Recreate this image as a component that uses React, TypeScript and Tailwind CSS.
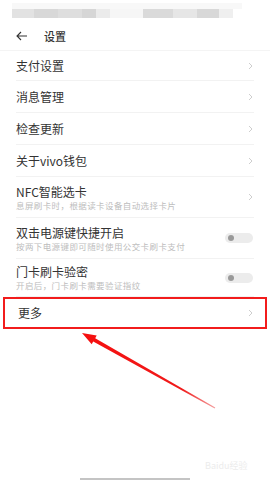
import React from 'react';

const font = { fontFamily: '"Noto Sans CJK SC", "Noto Sans", sans-serif' };

function Chevron() {
  return (
    <svg width="5" height="8" viewBox="0 0 5 8" className="shrink-0">
      <polyline points="1,1 4,4 1,7" fill="none" stroke="#c8c8c8" strokeWidth="0.9" />
    </svg>
  );
}

function Toggle() {
  return (
    <div className="w-[28px] h-[10px] rounded-full bg-[#ececec] flex items-center pl-[3px] shrink-0">
      <div className="w-[6px] h-[6px] rounded-full bg-[#9a9a9a]"></div>
    </div>
  );
}

type Row = { title: string; sub?: string; toggle?: boolean; h: string };

const ROWS: Row[] = [
  { title: '支付设置', h: 'h-[30px]' },
  { title: '消息管理', h: 'h-[32px]' },
  { title: '检查更新', h: 'h-[32px]' },
  { title: '关于vivo钱包', h: 'h-[32px]' },
  { title: 'NFC智能选卡', sub: '息屏刷卡时，根据读卡设备自动选择卡片', h: 'h-[41px]' },
  { title: '双击电源键快捷开启', sub: '按两下电源键即可随时使用公交卡刷卡支付', toggle: true, h: 'h-[41px]' },
  { title: '门卡刷卡验密', sub: '开启后，门卡刷卡需要验证指纹', toggle: true, h: 'h-[38px]' },
];

export default function App() {
  return (
    <div className="relative w-[270px] h-[480px] bg-white flex flex-col overflow-hidden" style={font}>
      {/* blurred status bar */}
      <div className="h-[22px] pt-[3px] px-[12px] flex flex-col">
        <div className="h-[6px] w-[230px] bg-[#f8f8f8]"></div>
        <div className="h-[9px] flex items-start">
          <div className="w-[22px] h-[9px] bg-[#e2e2e2]"></div>
          <div className="w-[24px] h-[9px] bg-[#d8d8d8]"></div>
          <div className="w-[24px] h-[9px] bg-[#dedede]"></div>
          <div className="w-[14px] h-[9px] bg-[#d6d6d6]"></div>
          <div className="w-[14px] h-[9px] bg-[#ebebeb]"></div>
          <div className="w-[33px] h-[9px] bg-[#f6f6f6]"></div>
          <div className="w-[30px] h-[9px] bg-[#dadada]"></div>
          <div className="w-[24px] h-[9px] bg-[#e6e6e6]"></div>
          <div className="w-[22px] h-[9px] bg-[#d8d8d8]"></div>
          <div className="w-[14px] h-[9px] bg-[#efefef]"></div>
        </div>
      </div>

      {/* header */}
      <div className="h-[29px] flex items-center px-[16px] border-b border-[#f4f4f4]">
        <svg width="12" height="10" viewBox="0 0 12 10" className="mr-[16px]">
          <path d="M5 1 L1 5 L5 9 M1 5 H11" fill="none" stroke="#333" strokeWidth="1.1" />
        </svg>
        <span className="text-[11px] text-[#333] font-medium">设置</span>
      </div>

      {/* list */}
      <div className="flex flex-col">
        {ROWS.map((r) => (
          <div key={r.title} className={`${r.h} mx-[16px] pr-[1px] flex items-center justify-between border-b border-[#f2f2f2]`}>
            <div className="flex flex-col">
              <span className="text-[12px] leading-[15px] text-[#333]">{r.title}</span>
              {r.sub && <span className="text-[8.5px] leading-[12px] tracking-[0.4px] text-[#bdbdbd]">{r.sub}</span>}
            </div>
            {r.toggle ? <Toggle /> : <Chevron />}
          </div>
        ))}
        <div className="h-[32px] mx-[3px] border-2 border-[#f21c1c] flex items-center justify-between pl-[13px] pr-[12px]">
          <span className="text-[12px] text-[#333]">更多</span>
          <Chevron />
        </div>
      </div>

      <div className="flex-1"></div>
      <div className="flex justify-center">
        <div className="w-[110px] h-[2px] bg-[#c4c4c4]"></div>
      </div>

      {/* annotation arrow */}
      <svg className="absolute left-0 top-0" width="270" height="480">
        <defs>
          <linearGradient id="ar" x1="82" y1="333" x2="215" y2="408" gradientUnits="userSpaceOnUse">
            <stop offset="0" stopColor="#f50f0f" />
            <stop offset="0.75" stopColor="#f01a1a" />
            <stop offset="1" stopColor="#f4a0a0" />
          </linearGradient>
        </defs>
        <polygon
          points="82,333 96.7,335.5 95.2,338.2 215.3,407.6 214.7,408.4 93.2,341.6 91.7,344.3"
          fill="url(#ar)"
        />
      </svg>

      {/* watermark */}
      <div className="absolute left-[205px] top-[461px] text-[9px] text-[#ececec] leading-none">Baidu经验</div>
    </div>
  );
}
